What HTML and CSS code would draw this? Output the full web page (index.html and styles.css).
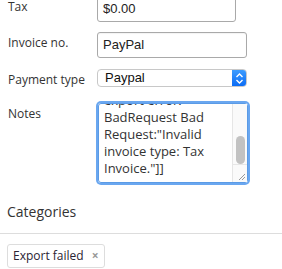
FILE: index.html
```html
<!DOCTYPE html>
<html lang="en">
<head>
    <meta charset="UTF-8">
    <title>Invoice</title>
    <link rel="stylesheet" href="styles.css">
</head>
<body>
    <div class="form">
        <div class="row row-tax">
            <label>Tax</label>
            <div class="field field-short">$0.00</div>
        </div>
        <div class="row row-invoice">
            <label>Invoice no.</label>
            <div class="field">PayPal</div>
        </div>
        <div class="row row-payment">
            <label>Payment type</label>
            <div class="select">
                <span class="select-value">Paypal</span>
                <span class="stepper">
                    <svg width="9" height="13" viewBox="0 0 9 13">
                        <path d="M1.5 5 L4.5 2 L7.5 5" fill="none" stroke="#fff" stroke-width="1.4"/>
                        <path d="M1.5 8 L4.5 11 L7.5 8" fill="none" stroke="#fff" stroke-width="1.4"/>
                    </svg>
                </span>
            </div>
        </div>
        <div class="row row-notes">
            <label>Notes</label>
            <div class="notes">
                <div class="notes-text">
                    <div class="notes-inner">export error: BadRequest Bad Request:"Invalid invoice type: Tax Invoice."]]</div>
                </div>
                <div class="scrollbar">
                    <div class="thumb"></div>
                    <div class="grip">
                        <svg width="8" height="8" viewBox="0 0 8 8">
                            <path d="M1 7 L7 1 M4 7 L7 4" stroke="#999" stroke-width="1"/>
                        </svg>
                    </div>
                </div>
            </div>
        </div>
    </div>

    <h3 class="section-title">Categories</h3>
    <div class="tags">
        <span class="tag">Export failed <span class="tag-remove">&times;</span></span>
    </div>
</body>
</html>
```

FILE: styles.css
```css
body {
    margin: 0;
    font-family: 'Open Sans', sans-serif;
    font-size: 13px;
    color: #333;
    background: #fff;
    overflow: hidden;
}
.form {
    padding-left: 8px;
    margin-top: -4px;
}
.row {
    display: flex;
    align-items: flex-start;
}
.row label {
    width: 89px;
    padding-top: 2px;
    font-size: 12px;
    line-height: 18px;
    color: #333;
}
.row-invoice {
    margin-top: 10px;
}
.row-payment {
    margin-top: 11px;
}
.row-notes {
    margin-top: 14px;
}
.field {
    box-sizing: border-box;
    width: 150px;
    height: 26px;
    border: 1px solid #a9a9a9;
    border-radius: 3px;
    padding: 0 5px;
    font-family: 'Liberation Sans', Arial, sans-serif;
    font-size: 13px;
    line-height: 24px;
    color: #222;
    box-shadow: inset 0 1px 1px rgba(0, 0, 0, 0.05);
}
.field-short {
    width: 139px;
}
.select {
    box-sizing: border-box;
    width: 150px;
    height: 18px;
    display: flex;
    border: 1px solid #c8c8c8;
    border-radius: 4px;
    overflow: hidden;
    font-family: 'Liberation Sans', Arial, sans-serif;
    font-size: 13px;
    color: #111;
}
.select-value {
    flex: 1;
    padding-left: 7px;
    line-height: 16px;
}
.stepper {
    width: 14px;
    background: linear-gradient(#3d9cff, #0b6cf5);
    display: flex;
    align-items: center;
    justify-content: center;
}
.notes {
    box-sizing: border-box;
    width: 150px;
    height: 80px;
    margin-left: 1px;
    display: flex;
    border: 1px solid #5b9be6;
    border-radius: 3px;
    box-shadow: 0 0 0 2px #6aa7f0;
}
.notes-text {
    flex: 1;
    overflow: hidden;
    padding-left: 5px;
}
.notes-inner {
    margin-top: -12px;
    line-height: 17px;
    color: #333;
}
.scrollbar {
    width: 14px;
    border-left: 1px solid #e6e6e6;
    background: #fafafa;
    display: flex;
    flex-direction: column;
}
.thumb {
    margin: 32px 2px 0 3px;
    height: 28px;
    border-radius: 5px;
    background: #c2c2c2;
}
.grip {
    margin-top: auto;
    height: 16px;
    border-top: 1px solid #e6e6e6;
    display: flex;
    align-items: flex-end;
    justify-content: flex-end;
    padding: 0 1px 1px 0;
}
.section-title {
    margin: 19px 0 0;
    padding: 0 8px 11px 7px;
    font-size: 14px;
    font-weight: 400;
    line-height: 20px;
    border-bottom: 1px solid #ddd;
    color: #333;
}
.tags {
    padding: 10px 7px 0;
}
.tag {
    display: inline-block;
    border: 1px solid #ddd;
    border-radius: 3px;
    padding: 0 5px 0 5px;
    line-height: 22px;
    font-size: 12px;
    color: #2a2333;
}
.tag-remove {
    color: #999;
    font-weight: bold;
    margin-left: 5px;
}
```
